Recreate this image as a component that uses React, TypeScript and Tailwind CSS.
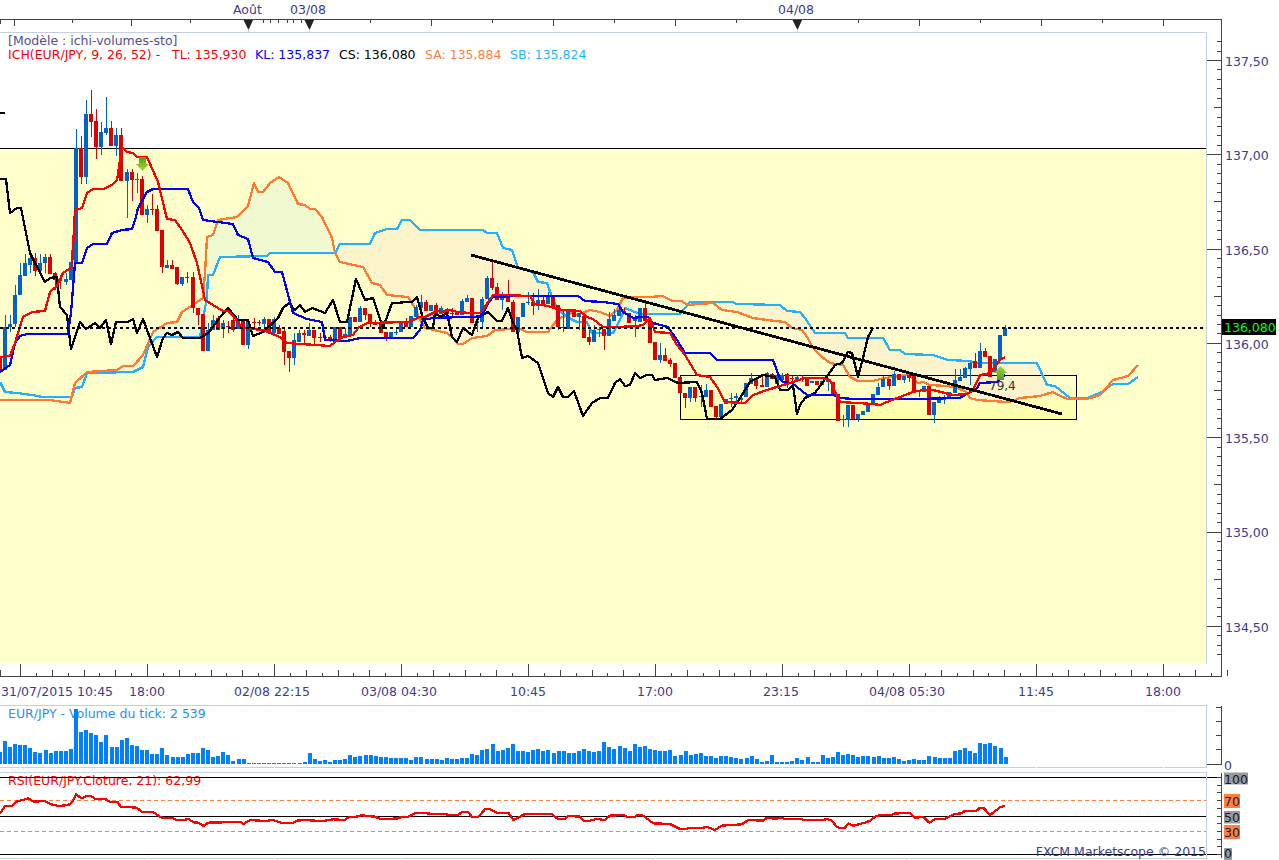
import React from "react";

type P = [number, number];
const INK = "#3c3c8c";
const EDGE = "#c3d0e0";
const AXIS = "#444444";

const TL: P[] = [[0,357],[10,356],[15,343],[23,317],[32,312],[45,311],[50,292],[57,286],[63,273],[72,267],[75,210],[82,208],[87,193],[93,189],[103,189],[112,185],[117,180],[120,160],[122,147],[127,152],[133,153],[137,157],[147,157],[158,182],[167,219],[175,220],[182,230],[187,238],[190,243],[197,263],[203,290],[205,300],[213,305],[223,311],[228,311],[235,318],[242,328],[263,330],[280,337],[287,343],[330,346],[335,342],[343,337],[353,335],[358,328],[367,323],[408,322],[420,317],[425,317],[437,311],[442,312],[450,310],[457,312],[470,313],[480,313],[483,310],[488,302],[493,295],[503,295],[530,296],[535,304],[548,306],[557,309],[563,310],[580,311],[587,317],[593,319],[603,327],[617,327],[637,326],[643,325],[650,318],[655,332],[670,333],[677,345],[685,355],[697,375],[710,377],[717,387],[725,402],[745,403],[753,395],[767,390],[780,386],[790,383],[793,382],[805,378],[823,378],[830,380],[835,392],[840,402],[857,403],[873,404],[880,405],[887,402],[900,397],[913,392],[923,390],[933,390],[953,395],[967,394],[973,390],[980,375],[990,373],[1000,360],[1005,357]];
const KL: P[] = [[0,372],[10,365],[15,343],[20,336],[27,334],[68,334],[71,313],[75,263],[82,263],[87,248],[93,244],[107,244],[112,233],[122,230],[132,229],[136,217],[138,208],[147,192],[153,189],[188,189],[193,202],[199,208],[203,220],[233,224],[238,235],[248,239],[253,258],[268,262],[275,272],[282,272],[293,313],[307,319],[322,322],[325,340],[347,341],[360,338],[413,338],[420,330],[423,320],[433,318],[463,317],[475,317],[482,315],[488,303],[493,297],[520,296],[550,296],[578,296],[585,301],[603,302],[618,304],[623,312],[633,318],[640,317],[648,317],[653,323],[668,327],[677,340],[685,353],[710,353],[717,360],[773,360],[780,379],[783,382],[792,383],[807,395],[833,395],[840,398],[853,399],[913,399],[960,398],[977,388],[980,383],[997,382],[1005,375]];
const CS: P[] = [[0,179],[6,179],[10,213],[17,208],[21,208],[27,238],[30,253],[35,263],[45,282],[50,278],[57,277],[60,307],[67,315],[71,349],[80,322],[86,329],[95,323],[100,328],[106,320],[111,344],[116,322],[128,322],[133,319],[137,333],[143,319],[150,338],[157,357],[163,338],[167,333],[172,335],[178,332],[183,338],[200,338],[208,333],[213,327],[220,317],[228,308],[238,320],[248,320],[253,336],[263,332],[278,318],[283,308],[289,303],[295,310],[300,305],[305,312],[312,308],[325,313],[333,300],[340,322],[347,322],[356,279],[365,300],[373,298],[383,328],[392,303],[398,303],[405,302],[412,302],[417,297],[420,308],[423,318],[428,328],[433,328],[435,313],[440,317],[447,313],[452,337],[457,342],[463,328],[472,335],[478,318],[482,315],[488,312],[497,321],[502,321],[508,308],[513,323],[517,330],[522,358],[528,356],[538,363],[548,393],[553,397],[558,387],[563,397],[568,397],[574,391],[583,416],[592,403],[600,398],[608,398],[615,383],[620,379],[625,386],[630,385],[635,373],[640,378],[647,375],[652,375],[655,380],[667,378],[678,383],[697,382],[702,393],[707,419],[720,419],[732,410],[742,395],[750,382],[763,375],[775,377],[780,390],[788,390],[793,385],[797,414],[800,405],[805,398],[815,393],[823,382],[835,365],[842,363],[848,352],[852,353],[858,377],[863,358],[868,337],[873,328]];
const SA: P[] = [[0,400],[50,400],[70,403],[75,383],[87,372],[117,370],[123,366],[133,366],[143,355],[153,332],[167,323],[177,322],[182,312],[197,302],[203,298],[205,273],[207,237],[213,235],[218,220],[237,217],[248,206],[254,183],[258,192],[263,192],[270,183],[279,177],[288,183],[298,204],[305,205],[310,209],[315,209],[322,217],[332,238],[335,253],[340,262],[363,267],[372,283],[380,285],[387,295],[408,297],[415,308],[420,320],[425,328],[447,333],[453,338],[458,344],[463,344],[472,338],[487,336],[495,330],[510,329],[520,329],[527,332],[548,332],[553,325],[558,319],[563,317],[572,313],[577,315],[590,310],[600,312],[610,316],[617,310],[623,298],[632,297],[650,297],[663,296],[672,301],[682,301],[687,305],[713,303],[722,310],[737,312],[753,318],[767,320],[785,322],[792,328],[802,330],[807,337],[813,348],[822,357],[830,363],[843,365],[850,377],[858,381],[873,381],[880,379],[892,377],[907,375],[913,378],[918,383],[923,382],[930,385],[947,386],[957,388],[965,391],[970,398],[977,400],[1007,402],[1013,401],[1020,398],[1040,396],[1053,392],[1060,396],[1068,399],[1087,399],[1100,395],[1113,380],[1128,376],[1138,365]];
const SB: P[] = [[0,382],[5,392],[17,393],[32,395],[43,397],[72,397],[75,388],[82,387],[87,373],[133,372],[143,367],[148,347],[157,337],[200,337],[207,297],[208,275],[213,275],[220,257],[267,256],[270,253],[335,253],[340,244],[370,244],[375,233],[387,229],[397,229],[402,220],[410,220],[420,230],[483,230],[487,233],[497,233],[503,248],[512,250],[518,268],[533,272],[538,282],[547,283],[552,297],[557,308],[567,317],[577,322],[587,322],[592,333],[613,333],[620,320],[625,308],[640,314],[680,314],[690,302],[710,302],[732,302],[737,304],[780,305],[787,311],[800,312],[805,318],[815,333],[845,333],[848,338],[883,338],[890,350],[900,350],[905,354],[933,355],[948,360],[970,361],[977,363],[1037,363],[1047,385],[1055,386],[1070,398],[1087,398],[1100,393],[1113,384],[1128,384],[1138,377]];
const TREND: P[] = [[471,255],[1062,414]];

// 0 red, 1 blue: body top, body bottom, wick top, wick bottom
const C: number[][] = [[0,357,370,357,370],[1,327,370,315,370],[1,324,327,315,332],[1,295,324,285,327],[1,275,295,263,295],[1,263,276,254,276],[1,258,265,253,273],[0,258,271,253,276],[1,263,271,254,276],[1,257,263,254,273],
[0,257,274,254,274],[0,273,280,272,290],[0,279,281,275,289],[1,279,282,273,285],[1,262,280,250,280],[1,148,263,129,263],[0,148,177,136,184],[1,114,177,100,184],[0,114,122,90,137],[0,121,147,109,159],
[1,132,147,122,155],[1,128,133,97,135],[0,128,146,121,146],[1,135,146,128,156],[0,135,181,128,181],[1,172,181,169,218],[0,172,180,169,201],[1,179,180,173,193],[0,179,215,176,215],[1,209,215,205,223],
[0,209,210,194,215],[0,209,231,205,231],[0,230,267,230,273],[1,265,268,260,268],[0,265,269,260,269],[0,267,284,267,285],[1,277,284,277,286],[0,277,278,272,283],[0,277,308,272,313],[0,308,315,308,325],
[0,314,351,314,351],[1,330,351,323,351],[1,320,330,315,330],[0,318,330,316,330],[1,323,329,320,338],[0,326,327,321,333],[0,320,330,318,332],[1,319,329,315,329],[0,319,345,319,345],[1,321,345,321,349],
[0,322,323,318,330],[0,322,323,320,326],[1,319,324,317,333],[0,319,333,319,333],[1,319,333,317,333],[0,328,334,325,334],[0,331,352,328,365],[0,351,358,351,372],[1,340,358,333,365],[1,333,342,330,342],
[0,333,335,330,345],[1,330,336,323,336],[0,330,338,330,345],[0,337,338,333,342],[0,337,338,335,340],[0,337,339,335,342],[1,327,339,327,339],[0,327,338,327,338],[1,334,338,328,338],[1,317,335,317,335],
[0,317,322,317,322],[1,308,322,306,322],[0,308,315,308,320],[0,314,322,314,327],[0,322,325,320,325],[0,324,333,322,333],[0,332,337,332,341],[1,332,337,332,337],[1,332,333,329,335],[1,322,332,322,332],
[0,323,327,318,327],[1,316,327,316,327],[1,307,317,305,317],[1,302,308,295,320],[0,302,311,300,311],[1,305,311,305,311],[0,305,314,303,314],[1,308,314,306,314],[0,309,314,308,314],[0,313,314,308,318],
[0,312,315,312,315],[1,301,315,299,315],[1,298,302,295,302],[0,298,323,298,323],[1,321,323,317,332],[1,299,322,297,328],[1,278,299,276,299],[0,278,288,260,290],[0,287,300,283,300],[1,298,300,292,310],
[0,298,302,280,302],[0,302,332,300,332],[1,317,332,317,332],[1,303,317,303,317],[1,302,303,292,305],[0,302,306,293,315],[1,300,306,289,310],[0,300,304,295,304],[1,295,304,292,304],[0,295,307,295,307],
[0,305,327,305,330],[0,327,328,310,332],[1,309,329,309,329],[0,309,317,309,317],[1,313,317,313,330],[0,316,338,316,338],[0,337,342,330,345],[1,330,342,325,342],[1,329,330,327,337],[0,329,336,329,350],
[1,319,336,312,336],[1,315,321,309,321],[1,310,316,308,316],[0,311,313,308,313],[0,313,323,313,323],[1,319,321,315,337],[1,308,322,308,322],[0,308,321,303,321],[0,319,343,317,343],[0,342,360,342,360],
[1,355,360,343,363],[0,355,361,348,361],[0,360,364,358,367],[0,363,378,363,378],[0,377,393,377,393],[0,393,398,393,408],[1,387,398,387,402],[0,387,398,387,402],[1,396,397,385,407],[1,390,397,384,397],
[0,390,407,390,407],[0,406,417,406,419],[1,404,417,404,417],[1,399,404,399,404],[1,398,399,393,407],[1,396,398,393,403],[1,398,400,393,403],[1,383,397,383,397],[1,378,384,373,384],[0,378,386,378,389],
[0,385,387,375,387],[1,373,387,372,387],[0,374,379,373,379],[1,375,384,375,384],[1,375,380,373,380],[0,374,382,373,388],[0,378,379,376,384],[1,377,380,375,380],[0,378,379,375,382],[0,378,386,378,386],
[1,381,383,381,383],[0,381,385,381,385],[1,381,385,381,385],[1,379,382,379,391],[0,382,395,382,395],[0,394,421,394,421],[1,419,420,415,427],[1,405,420,405,427],[0,405,419,405,419],[1,414,419,414,422],
[1,411,415,411,415],[1,403,412,403,412],[1,394,404,394,404],[1,387,395,383,395],[1,379,387,376,387],[0,379,386,379,390],[1,374,386,371,386],[0,374,380,374,380],[1,376,380,376,383],[0,375,378,374,382],
[0,376,391,376,391],[1,391,392,391,397],[1,386,392,386,392],[0,386,415,386,415],[1,402,415,402,423],[1,398,403,396,403],[1,397,400,395,404],[1,392,399,392,399],[1,380,393,369,393],[1,377,381,369,381],
[1,368,378,367,378],[1,363,369,362,385],[0,361,368,353,368],[1,351,368,343,368],[0,351,357,348,357],[0,356,377,356,377],[1,359,372,359,372],[1,335,360,335,360],[1,328,336,325,336]];

const VOL = [12,23,17,20,19,19,16,12,11,14,11,13,13,13,15,55,32,34,31,29,22,29,17,17,24,26,19,18,14,14,10,10,16,9,7,7,7,10,11,11,16,14,7,8,12,9,3,5,5,1,1,1,1,1,1,1,1,1,1,1,2,11,5,3,4,2,4,4,5,9,7,8,9,9,8,7,7,6,6,6,6,4,7,
7,5,5,5,4,6,5,5,6,6,10,9,14,15,20,13,14,16,20,13,13,12,14,15,13,14,11,13,13,11,11,13,15,13,12,13,22,17,15,18,16,13,20,17,18,15,14,13,13,14,8,9,13,9,10,11,8,8,6,8,8,7,6,5,6,8,5,2,3,9,2,2,2,3,6,4,7,2,2,9,6,7,12,
9,10,9,7,8,8,7,8,6,6,7,5,3,4,5,4,4,8,7,6,6,6,13,14,16,13,11,21,20,21,18,16,7];

const z = (ox: number, oy: number, a: P[]): P[] => a.map(([x, y]) => [ox + x / 3, oy + y / 3]);
const RSI: P[] = [
  ...z(0,660,[[0,460],[15,438],[35,438],[50,425],[85,415],[100,425],[135,423],[150,432],[175,438],[205,435],[218,425],[228,403],[245,415],[260,407],[272,407],[288,418],[315,417],[330,425],[352,425],[362,440],[410,443],[425,455],[460,457],[485,473],[515,473],[530,480],[550,480],[565,477],[580,487],[595,488],[610,498],[625,488],[670,487],[680,485],[720,485],[730,492],[750,480],[795,483],[820,480],[850,490],[875,490],[890,482],[915,480],[945,482],[975,482],[1000,478],[1035,480],[1045,472],[1070,470],[1085,465],[1100,468],[1125,470],[1145,478],[1195,475],[1205,470],[1225,470],[1245,460],[1260,458]]),
  ...z(420,660,[[0,458],[40,462],[70,462],[85,464],[115,464],[125,457],[145,456],[155,470],[175,470],[195,448],[210,447],[230,458],[265,458],[280,480],[315,462],[395,462],[412,476],[435,476],[445,468],[480,470],[490,482],[510,482],[530,477],[555,480],[570,467],[610,465],[620,470],[645,470],[655,464],[665,464],[700,490],[750,492],[780,507],[800,507],[805,503],[850,503],[860,500],[885,510],[905,497],[965,493],[985,480],[1030,482],[1040,474],[1070,476],[1085,473],[1095,477],[1145,478],[1150,480],[1210,480],[1220,477],[1235,482],[1250,500],[1260,505]]),
  ...z(840,660,[[15,503],[25,490],[40,497],[75,488],[90,482],[105,470],[125,464],[155,466],[160,461],[210,458],[225,473],[250,471],[268,488],[288,476],[315,476],[345,462],[365,460],[375,452],[410,452],[420,443],[430,443],[450,465],[480,442],[495,437]]),
];

const MAJOR = [20, 147, 274, 401, 528, 655, 782, 909, 1036, 1163];
const pts = (a: P[]) => a.map((p) => p.join(",")).join(" ");
const bx = (i: number) => 5.08 * i - 0.5;

function at(s: P[], x: number) {
  for (let i = 1; i < s.length; i++) {
    if (x <= s[i][0]) {
      const [x0, y0] = s[i - 1];
      const [x1, y1] = s[i];
      return x1 === x0 ? y1 : y0 + ((y1 - y0) * (x - x0)) / (x1 - x0);
    }
  }
  return s[s.length - 1][1];
}

function cloud() {
  const out: { pos: boolean; d: string }[] = [];
  let run: { x: number; a: number; b: number }[] = [];
  let sign = 0;
  const flush = () => {
    if (run.length > 1) {
      const d = [...run.map((r) => `${r.x},${r.a}`), ...run.slice().reverse().map((r) => `${r.x},${r.b}`)].join(" ");
      out.push({ pos: sign > 0, d });
    }
    run = [];
  };
  for (let x = 72; x <= 1138; x++) {
    const a = at(SA, x);
    const b = at(SB, x);
    const s = a < b ? 1 : -1;
    if (s !== sign) {
      const last = run[run.length - 1];
      flush();
      if (last) run.push(last);
      sign = s;
    }
    run.push({ x, a, b });
  }
  flush();
  return out;
}

const T = ({ x, y, children, fill = INK, anchor }: { x: number; y: number; children: React.ReactNode; fill?: string; anchor?: "middle" }) => (
  <text x={x} y={y} fill={fill} textAnchor={anchor} className="text-[12.5px]">
    {children}
  </text>
);

function Line({ x1, y1, x2, y2, c = AXIS }: { x1: number; y1: number; x2: number; y2: number; c?: string }) {
  return <line x1={x1} y1={y1} x2={x2} y2={y2} stroke={c} strokeWidth={1} shapeRendering="crispEdges" />;
}

function Series({ d, c, w = 2.3 }: { d: P[]; c: string; w?: number }) {
  return <polyline points={pts(d)} fill="none" stroke={c} strokeWidth={w} strokeLinejoin="round" shapeRendering="crispEdges" />;
}

function TopRuler() {
  const long = [14.5, 131.5, 431.5, 553.5, 675.5, 919.5, 1041.5, 1163.5];
  const short = [72.5, 190.5, 263.5, 270.5, 278.5, 287.5, 293.5, 301.5, 370.5, 492.5, 614.5, 736.5, 858.5, 980.5, 1102.5];
  return (
    <svg width={1279} height={32} viewBox="0 0 1279 32" className="block shrink-0">
      <T x={233} y={14}>Août</T>
      <T x={290} y={14}>03/08</T>
      <T x={778} y={14}>04/08</T>
      <Line x1={0} y1={19.5} x2={1221} y2={19.5} />
      <Line x1={0.5} y1={19} x2={0.5} y2={24} />
      {long.map((x) => <Line key={x} x1={x} y1={19} x2={x} y2={26} />)}
      {short.map((x) => <Line key={x} x1={x} y1={19} x2={x} y2={23} />)}
      {[248, 309, 797].map((x) => (
        <g key={x}>
          <Line x1={x + 0.5} y1={28} x2={x + 0.5} y2={32} c={EDGE} />
          <polygon points={`${x - 4.5},20 ${x + 5},20 ${x + 1},29 ${x},29`} fill="#222222" />
        </g>
      ))}
      <Line x1={1221.5} y1={19} x2={1221.5} y2={32} />
    </svg>
  );
}

function Arrow({ x, y, up }: { x: number; y: number; up?: boolean }) {
  const shape = "0,0 -6.5,7 -3.5,7 -3.5,14 3.5,14 3.5,7 6.5,7";
  const t = up ? `translate(${x} ${y})` : `translate(${x} ${y + 14}) scale(1 -1)`;
  return <polygon points={shape} transform={t} fill={up ? "url(#arrUp)" : "url(#arrDown)"} />;
}

function PriceChart() {
  const fills = cloud();
  return (
    <svg width={1206} height={631} viewBox="0 33 1206 631" className="block">
      <defs>
        <linearGradient id="box" x1="0" y1="0" x2="0" y2="1">
          <stop offset="0" stopColor="#ffffd2" />
          <stop offset="1" stopColor="#ffffa6" />
        </linearGradient>
        <linearGradient id="arrUp" x1="0" y1="0" x2="0" y2="1">
          <stop offset="0" stopColor="#a8d838" />
          <stop offset="1" stopColor="#549a10" />
        </linearGradient>
        <linearGradient id="arrDown" x1="0" y1="1" x2="0" y2="0">
          <stop offset="0" stopColor="#549a10" />
          <stop offset="1" stopColor="#a8d838" />
        </linearGradient>
      </defs>
      <rect x={0} y={148} width={1206} height={516} fill="#ffffcc" />
      <rect x={680.5} y={375.5} width={396} height={44} fill="url(#box)" />
      {fills.map((f, i) => (
        <polygon key={i} points={f.d} fill={f.pos ? "#f1f9d0" : "#fdf4cb"} />
      ))}
      <rect x={680.5} y={375.5} width={396} height={44} fill="none" stroke="#000000" strokeWidth={1} shapeRendering="crispEdges" />
      <Line x1={0} y1={148.5} x2={1206} y2={148.5} c="#000000" />
      <rect x={0} y={112} width={5} height={2} fill="#000000" />
      <Series d={SB} c="#22b0ff" />
      <Series d={SA} c="#ff7a30" />
      <g shapeRendering="crispEdges">
        {C.map(([c, t, b, wt, wb], i) => {
          const col = c ? "#0063c6" : "#dc0000";
          const x = Math.round(bx(i));
          return (
            <g key={i}>
              <rect x={x} y={wt} width={1} height={wb - wt} fill={col} />
              <rect x={x - 2} y={t} width={4} height={b - t} fill={col} />
            </g>
          );
        })}
      </g>
      <Series d={CS} c="#000000" />
      <Series d={KL} c="#0000ff" />
      <Series d={TL} c="#ff0000" />
      <line x1={0} y1={328} x2={1206} y2={328} stroke="#000000" strokeWidth={2} strokeDasharray="3 3" shapeRendering="crispEdges" />
      <Series d={TREND} c="#000000" w={2.8} />
      <Arrow x={142.5} y={157} />
      <Arrow x={1000.5} y={366} up />
      <text x={989} y={390} fill="#333333" className="text-[12px]">79,4</text>
    </svg>
  );
}

function PriceAxis() {
  const labels: [string, number][] = [["137,50", 61], ["137,00", 155], ["136,50", 250], ["136,00", 344], ["135,50", 438], ["135,00", 532], ["134,50", 627]];
  const ticks = Array.from({ length: 66 }, (_, k) => k - 12);
  return (
    <svg width={72} height={632} viewBox="1207 32 72 632" className="block shrink-0">
      <Line x1={1221.5} y1={32} x2={1221.5} y2={664} />
      {ticks.map((k) => {
        const y = Math.round(154.3 + 9.43 * k) + 0.5;
        const s = k % 10 === 0 ? 1207 : k % 5 === 0 ? 1214 : 1217;
        return <Line key={k} x1={s} y1={y} x2={1221} y2={y} />;
      })}
      {labels.map(([t, y]) => <T key={t} x={1225} y={y + 5}>{t}</T>)}
      <rect x={1222} y={319} width={54} height={16} fill="#000000" />
      <T x={1224} y={332} fill="#00ff00">136,080</T>
    </svg>
  );
}

function TimeAxis() {
  const labels: [string, number][] = [["31/07/2015 10:45", 1], ["18:00", 129], ["02/08 22:15", 234], ["03/08 04:30", 361], ["10:45", 510], ["17:00", 637], ["23:15", 763], ["04/08 05:30", 869], ["11:45", 1018], ["18:00", 1145]];
  const minor = Array.from({ length: 77 }, (_, k) => k);
  return (
    <svg width={1279} height={41} viewBox="0 664 1279 41" className="block shrink-0">
      <Line x1={0} y1={676.5} x2={1222} y2={676.5} />
      <Line x1={1221.5} y1={664} x2={1221.5} y2={677} />
      <Line x1={0.5} y1={670} x2={0.5} y2={677} />
      {minor.map((k) => {
        const x = Math.round(20 + 15.875 * k) + 0.5;
        return <Line key={k} x1={x} y1={k % 2 ? 673 : 670} x2={x} y2={676} />;
      })}
      {MAJOR.map((x) => <Line key={x} x1={x + 0.5} y1={664} x2={x + 0.5} y2={677} />)}
      {labels.map(([t, x]) => <T key={x} x={x} y={696}>{t}</T>)}
    </svg>
  );
}

function BrokenEdge({ y }: { y: number }) {
  const xs = [0, ...MAJOR.map((x) => x + 1)];
  return (
    <g>
      {xs.map((x, i) => (
        <Line key={x} x1={x} y1={y} x2={i < MAJOR.length ? MAJOR[i] : 1206} y2={y} c={EDGE} />
      ))}
    </g>
  );
}

function VolumeRow() {
  return (
    <div className="flex h-[63px] shrink-0">
      <div className="relative w-[1207px] border-t border-r border-[#c3d0e0]">
        <div className="absolute left-2 top-0 whitespace-nowrap text-[12.5px] leading-[15px] text-[#2590f0]">
          EUR/JPY - Volume du tick: 2 539
        </div>
        <svg width={1206} height={62} viewBox="0 706 1206 62" className="relative block">
          <g shapeRendering="crispEdges">
            {VOL.map((h, i) => (
              <rect key={i} x={Math.round(5.08 * i - 2.2)} y={764 - h} width={4} height={h} fill="#0080ff" />
            ))}
          </g>
          <BrokenEdge y={767.5} />
        </svg>
      </div>
      <svg width={72} height={63} viewBox="1207 705 72 63" className="block shrink-0 overflow-visible">
        <Line x1={1221.5} y1={706} x2={1221.5} y2={765} />
        {[707.5, 721.5, 735.5, 749.5].map((y) => <Line key={y} x1={1216} y1={y} x2={1221} y2={y} />)}
        <Line x1={1207} y1={764.5} x2={1221} y2={764.5} />
        <T x={1224} y={770}>0</T>
      </svg>
    </div>
  );
}

function RsiRow() {
  const boxes: [string, number, number, number, string][] = [["100", 772.5, 12, 24, "#999999"], ["70", 794, 14, 16, "#ff7f3f"], ["50", 811, 12.5, 16, "#999999"], ["30", 825, 14, 16, "#ff7f3f"], ["0", 848, 12, 8, "#999999"]];
  return (
    <div className="mt-1 flex h-[88px] shrink-0">
      <div className="relative h-[87px] w-[1207px] border-t border-r border-[#c3d0e0]">
        <div className="absolute left-2 top-0 whitespace-nowrap text-[12.5px] leading-[15px] text-[#ff0000]">
          RSI(EUR/JPY.Cloture, 21): 62,99
        </div>
        <svg width={1206} height={86} viewBox="0 773 1206 86" className="relative block">
          <Line x1={0} y1={777.5} x2={1206} y2={777.5} c="#000000" />
          <Line x1={0} y1={816.5} x2={1206} y2={816.5} c="#000000" />
          <Line x1={0} y1={854.5} x2={1206} y2={854.5} c="#000000" />
          <line x1={0} y1={800.5} x2={1206} y2={800.5} stroke="#ff7f3f" strokeDasharray="4 3" shapeRendering="crispEdges" />
          <line x1={0} y1={831.5} x2={1206} y2={831.5} stroke="#ff7f3f" strokeDasharray="4 3" shapeRendering="crispEdges" />
          <Series d={RSI} c="#ff0000" />
          <BrokenEdge y={858.5} />
        </svg>
        <div className="absolute bottom-0 right-0 whitespace-nowrap text-[12.5px] leading-[15px] text-[#3c3c8c]">
          FXCM Marketscope © 2015
        </div>
      </div>
      <svg width={72} height={88} viewBox="1207 772 72 88" className="block shrink-0 overflow-visible">
        <Line x1={1207} y1={777.5} x2={1221} y2={777.5} c="#000000" />
        <Line x1={1207} y1={854.5} x2={1221} y2={854.5} c="#000000" />
        <Line x1={1221.5} y1={773} x2={1221.5} y2={858} />
        {Array.from({ length: 11 }, (_, k) => k).map((k) => {
          const y = Math.round(777 + 7.7 * k) + 0.5;
          return <Line key={k} x1={1217} y1={y} x2={1221} y2={y} />;
        })}
        {boxes.map(([t, y, h, w, c]) => (
          <g key={t}>
            <rect x={1224} y={y} width={w} height={h} fill={c} />
            <T x={1224} y={Math.min(y + h / 2 + 5, 858)} fill="#1a1a2a">{t}</T>
          </g>
        ))}
      </svg>
    </div>
  );
}

export default function App() {
  return (
    <div className="flex h-[860px] w-[1279px] flex-col overflow-hidden bg-white font-['DejaVu_Sans',sans-serif]">
      <TopRuler />
      <div className="flex h-[632px] shrink-0">
        <div className="relative w-[1207px] border-t border-r border-[#c3d0e0]">
          <PriceChart />
          <div className="absolute left-2 top-[1px] text-[12.5px] leading-[14px]">
            <div className="whitespace-nowrap text-[#50508c]">[Modèle : ichi-volumes-sto]</div>
            <div className="flex whitespace-nowrap">
              <span className="w-[164px] text-[#ff0000]">ICH(EUR/JPY, 9, 26, 52) -</span>
              <span className="w-[83px] text-[#ff0000]">TL: 135,930</span>
              <span className="w-[84px] text-[#0000ff]">KL: 135,837</span>
              <span className="w-[86px] text-[#000000]">CS: 136,080</span>
              <span className="w-[85px] text-[#ff7f3f]">SA: 135,884</span>
              <span className="text-[#1eb4ff]">SB: 135,824</span>
            </div>
          </div>
        </div>
        <PriceAxis />
      </div>
      <TimeAxis />
      <VolumeRow />
      <RsiRow />
    </div>
  );
}
